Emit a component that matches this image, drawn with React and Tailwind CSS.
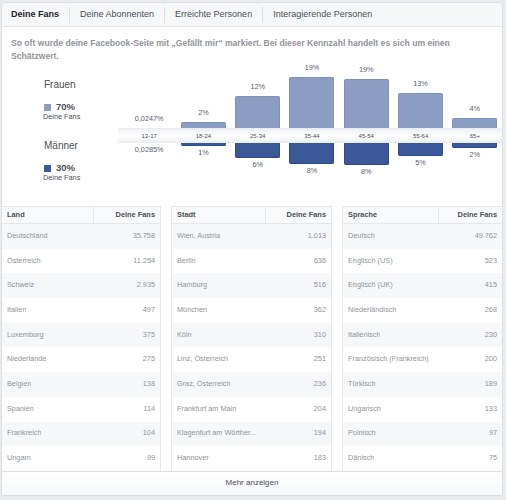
import React from "react";

const tabs = ["Deine Fans", "Deine Abonnenten", "Erreichte Personen", "Interagierende Personen"];

// age bands with bar heights (px) for women (top) and men (bottom)
const ages = [
  { band: "13-17", f: "0,0247%", fh: 0, m: "0,0285%", mh: 0 },
  { band: "18-24", f: "2%", fh: 6, m: "1%", mh: 3 },
  { band: "25-34", f: "12%", fh: 32, m: "6%", mh: 15 },
  { band: "35-44", f: "19%", fh: 51, m: "8%", mh: 21 },
  { band: "45-54", f: "19%", fh: 49, m: "8%", mh: 22 },
  { band: "55-64", f: "13%", fh: 35, m: "5%", mh: 13 },
  { band: "65+", f: "4%", fh: 10, m: "2%", mh: 5 },
];

const tables = [
  {
    title: "Land",
    split: "w-[92px]",
    rows: [
      ["Deutschland", "35.758"],
      ["Österreich", "11.254"],
      ["Schweiz", "2.935"],
      ["Italien", "497"],
      ["Luxemburg", "375"],
      ["Niederlande", "275"],
      ["Belgien", "138"],
      ["Spanien", "114"],
      ["Frankreich", "104"],
      ["Ungarn", "99"],
    ],
  },
  {
    title: "Stadt",
    split: "w-[94px]",
    rows: [
      ["Wien, Austria", "1.013"],
      ["Berlin", "636"],
      ["Hamburg", "516"],
      ["München", "362"],
      ["Köln", "310"],
      ["Linz, Österreich", "251"],
      ["Graz, Österreich", "236"],
      ["Frankfurt am Main", "204"],
      ["Klagenfurt am Wörther...", "194"],
      ["Hannover", "183"],
    ],
  },
  {
    title: "Sprache",
    split: "w-[96px]",
    rows: [
      ["Deutsch", "49.762"],
      ["Englisch (US)", "523"],
      ["Englisch (UK)", "415"],
      ["Niederländisch", "268"],
      ["Italienisch", "230"],
      ["Französisch (Frankreich)", "200"],
      ["Türkisch", "189"],
      ["Ungarisch", "133"],
      ["Polnisch", "97"],
      ["Dänisch", "75"],
    ],
  },
];

function Legend({ label, pct, color, top }) {
  return (
    <div className={top}>
      <div className="text-[10px] leading-[12px] text-[#4b4f56] pl-[1px]">{label}</div>
      <div className="flex items-center gap-[5px] mt-[10px] pl-[1px]">
        <span className={`w-[7px] h-[7px] mt-[2px] ${color}`} />
        <span className="text-[9.5px] leading-[11px] font-bold text-[#4b4f56]">{pct}</span>
      </div>
      <div className="text-[7.3px] leading-[9px] text-[#4b4f56]">Deine Fans</div>
    </div>
  );
}

function Table({ t, last }) {
  return (
    <div className={`flex flex-col border-r border-[#e5e7ea] ${t.title === "Land" ? "" : "border-l"} ${last ? "border-r-0" : ""}`}>
      <div className="flex h-[18px] items-center bg-[#f9fafb] border-y border-[#e5e7ea] text-[7.4px] font-bold text-[#4b4f56]">
        <div className={`${t.split} h-full flex items-center pl-[5px] border-r border-[#e5e7ea]`}>{t.title}</div>
        <div className="flex-1 text-right pr-[5px]">Deine Fans</div>
      </div>
      {t.rows.map(([name, n], i) => (
        <div
          key={name}
          className={`flex items-center justify-between h-[24.7px] px-[5px] text-[7.3px] text-[#90949c] ${i % 2 === 0 ? "bg-[#f6f7f9]" : "bg-white"}`}
        >
          <span className="truncate">{name}</span>
          <span>{n}</span>
        </div>
      ))}
    </div>
  );
}

export default function App() {
  return (
    <div className="w-[506px] h-[500px] bg-[#e9ebee] pt-[2px] pl-[1px] font-['Liberation_Sans',Arial,sans-serif]">
      <div className="w-[502px] h-[494px] bg-white border border-[#dddfe2] rounded-[3px] overflow-hidden flex flex-col">
        {/* tabs */}
        <div className="h-[24px] flex items-center bg-[#f6f7f9] border-b border-[#e5e7ea] pl-[9px] text-[9px] text-[#4b4f56]">
          {tabs.map((tab, i) => (
            <div key={tab} className="flex items-center">
              <span className={i === 0 ? "font-bold text-[#1d2129]" : ""}>{tab}</span>
              {i < tabs.length - 1 && <span className="w-px h-[16px] bg-[#dddfe2] mx-[10px]" />}
            </div>
          ))}
        </div>

        <p className="px-[9px] pt-[10px] text-[8.6px] leading-[13px] font-bold text-[#90949c]">
          So oft wurde deine Facebook-Seite mit „Gefällt mir“ markiert. Bei dieser Kennzahl handelt es sich um einen Schätzwert.
        </p>

        {/* age / gender chart */}
        <div className="flex h-[143px]">
          <div className="w-[116px] pl-[41px]">
            <Legend label="Frauen" pct="70%" color="bg-[#8b9dc3]" top="mt-[16px]" />
            <Legend label="Männer" pct="30%" color="bg-[#3b5998]" top="mt-[19px]" />
          </div>
          <div className="flex-1 flex flex-col">
            <div className="h-[65px] grid grid-cols-7 w-[380px] ml-[4px]">
              {ages.map((a) => (
                <div key={a.band} className="flex flex-col items-center justify-end">
                  <span className="text-[7.3px] leading-[10px] text-[#596070] mb-[4px]">{a.f}</span>
                  {a.fh > 0 && (
                    <div className="w-[45px] bg-[#8b9dc3] border border-b-0 border-[#7f92bc] rounded-t-[2px]" style={{ height: a.fh }} />
                  )}
                </div>
              ))}
            </div>
            <div className="h-[15px] bg-gradient-to-b from-[#eef0f3] via-white to-[#eef0f3] border-y border-[#e9ebee]">
              <div className="grid grid-cols-7 w-[380px] ml-[4px] h-full items-center">
                {ages.map((a) => (
                  <span key={a.band} className="text-center text-[6px] leading-[8px] text-[#4b4f56]">{a.band}</span>
                ))}
              </div>
            </div>
            <div className="grid grid-cols-7 w-[380px] ml-[4px]">
              {ages.map((a) => (
                <div key={a.band} className="flex flex-col items-center">
                  {a.mh > 0 && (
                    <div className="w-[45px] bg-[#3b5998] border border-t-0 border-[#2d4a88] rounded-b-[2px]" style={{ height: a.mh }} />
                  )}
                  <span className="text-[7.3px] leading-[10px] text-[#596070] mt-[2px]">{a.m}</span>
                </div>
              ))}
            </div>
          </div>
        </div>

        {/* tables */}
        <div className="grid grid-cols-[159px_161px_160px] gap-x-[10px]">
          {tables.map((t, i) => (
            <Table key={t.title} t={t} last={i === tables.length - 1} />
          ))}
        </div>

        <div className="flex-1 flex items-center justify-center border-t border-[#dddfe2] bg-gradient-to-b from-white to-[#f6f7f9] text-[8px] text-[#4b4f56]">
          Mehr anzeigen
        </div>
      </div>
    </div>
  );
}
